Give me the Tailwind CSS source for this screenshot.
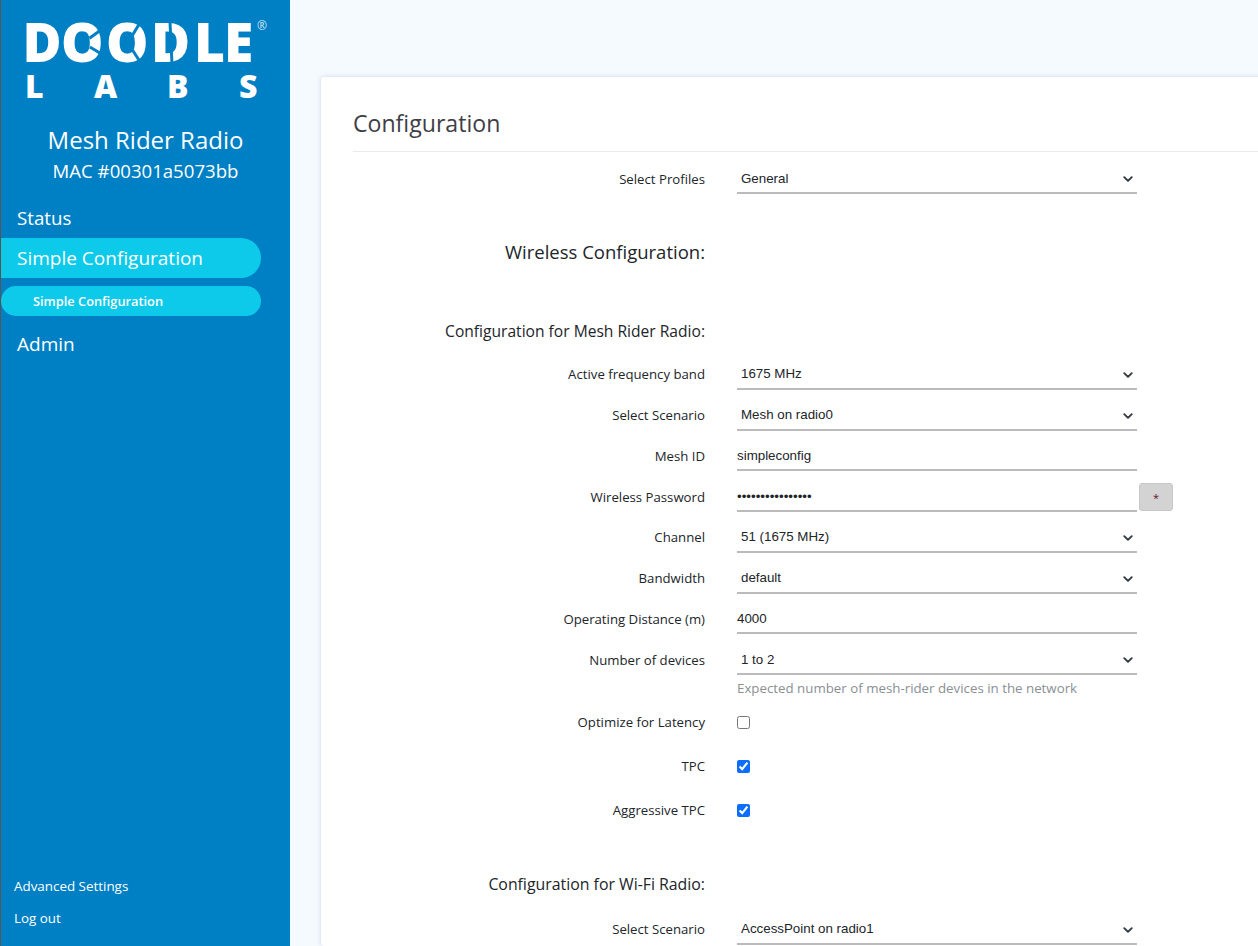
<!DOCTYPE html>
<html lang="en">
<head>
<meta charset="UTF-8">
<title>Configuration - Mesh Rider Radio</title>
<script src="https://cdn.jsdelivr.net/npm/@tailwindcss/browser@4"></script>
</head>
<body class="h-[946px] overflow-hidden bg-[#f5faff] font-['Open_Sans',sans-serif] text-[#212529]">
<div class="flex h-[946px]">

  <!-- sidebar -->
  <aside class="flex w-[290px] shrink-0 flex-col border-l border-[#555] bg-[#0080c4] text-white">
    <svg class="ml-[20px] shrink-0" width="253" height="108" viewBox="0 0 253 108">
      <text transform="scale(0.97 1)" x="1.5 41.2 87.6 134 178.4 209.3" y="62" fill="#fff" font-family="'Open Sans',sans-serif" font-weight="800" font-size="55">DOODLE</text>
      <path d="M68.5 38.3L79.8 30M68.9 47L80.9 54.2M111 36L118.2 24M111.3 49.7L118.9 61.5M149 22L151 64" stroke="#0080c4" stroke-width="3" fill="none"/>
      <text x="236" y="30" fill="#fff" fill-opacity="0.85" font-family="'Open Sans',sans-serif" font-size="12">®</text>
      <text x="4" y="98" fill="#fff" font-family="'Open Sans',sans-serif" font-weight="800" font-size="32">L</text>
      <text x="73" y="98" fill="#fff" font-family="'Open Sans',sans-serif" font-weight="800" font-size="32">A</text>
      <text x="146" y="98" fill="#fff" font-family="'Open Sans',sans-serif" font-weight="800" font-size="32">B</text>
      <text x="218" y="98" fill="#fff" font-family="'Open Sans',sans-serif" font-weight="800" font-size="32">S</text>
    </svg>
    <div class="mt-[16px] text-center text-[24px] leading-[32px]">Mesh Rider Radio</div>
    <div class="mt-[2px] text-center text-[18.6px] leading-[26px]">MAC #00301a5073bb</div>
    <nav class="mt-[14px] flex flex-col">
      <a class="block pl-[16px] text-[18.7px] leading-[40px]">Status</a>
      <a class="block w-[260px] rounded-r-[20px] bg-[#0dcaea] pl-[16px] text-[19px] leading-[40px]">Simple Configuration</a>
      <a class="mt-[8px] block w-[260px] rounded-[15px] bg-[#0dcaea] pl-[32px] text-[12.8px] font-semibold leading-[30px]">Simple Configuration</a>
      <a class="mt-[8px] block pl-[16px] text-[19px] font-medium leading-[40px]">Admin</a>
    </nav>
    <div class="mt-auto flex flex-col gap-[10px] pb-[17px] pl-[13px] text-[13.4px] leading-[22px]">
      <a>Advanced Settings</a>
      <a>Log out</a>
    </div>
  </aside>

  <!-- main -->
  <main class="min-w-0 flex-1 overflow-hidden pl-[31px] pt-[77px]">
    <section class="h-[869px] w-[1000px] overflow-hidden rounded-[3px] bg-white px-[32px] shadow-[0_0_4px_rgba(120,140,160,0.35)]">
      <h1 class="flex h-[75px] items-center border-b border-[#e9ecef] pt-[18px] text-[23.1px] text-[#3e3e46]">Configuration</h1>

      <form class="text-[13.2px]">
        <div class="flex h-[43px] items-center gap-[32px] pt-[8px]">
          <label class="w-[352px] pt-[4px] text-right">Select Profiles</label>
          <div class="relative w-[400px] border-b-2 border-[#bbb]"><select class="h-[31px] w-full appearance-none px-[4px] pt-[4px] font-['Liberation_Sans',sans-serif] text-[13.33px]"><option>General</option></select><svg class="absolute right-[4px] top-[13px]" width="10" height="10" viewBox="0 0 16 16"><path d="M2 5l6 6 6-6" fill="none" stroke="#343a40" stroke-width="3" stroke-linecap="round" stroke-linejoin="round"/></svg></div>
        </div>

        <div class="flex h-[114px] items-center gap-[32px]">
          <label class="w-[352px] text-right text-[18.5px]">Wireless Configuration:</label>
        </div>

        <div class="flex h-[44px] items-end gap-[32px] pb-[10px]">
          <label class="w-[352px] text-right text-[15.6px]">Configuration for Mesh Rider Radio:</label>
        </div>

        <div class="flex h-[40.75px] items-center gap-[32px]">
          <label class="w-[352px] pt-[4px] text-right">Active frequency band</label>
          <div class="relative w-[400px] border-b-2 border-[#bbb]"><select class="h-[31px] w-full appearance-none px-[4px] pt-[4px] font-['Liberation_Sans',sans-serif] text-[13.33px]"><option>1675 MHz</option></select><svg class="absolute right-[4px] top-[13px]" width="10" height="10" viewBox="0 0 16 16"><path d="M2 5l6 6 6-6" fill="none" stroke="#343a40" stroke-width="3" stroke-linecap="round" stroke-linejoin="round"/></svg></div>
        </div>
        <div class="flex h-[40.75px] items-center gap-[32px]">
          <label class="w-[352px] pt-[4px] text-right">Select Scenario</label>
          <div class="relative w-[400px] border-b-2 border-[#bbb]"><select class="h-[31px] w-full appearance-none px-[4px] pt-[4px] font-['Liberation_Sans',sans-serif] text-[13.33px]"><option>Mesh on radio0</option></select><svg class="absolute right-[4px] top-[13px]" width="10" height="10" viewBox="0 0 16 16"><path d="M2 5l6 6 6-6" fill="none" stroke="#343a40" stroke-width="3" stroke-linecap="round" stroke-linejoin="round"/></svg></div>
        </div>
        <div class="flex h-[40.75px] items-center gap-[32px]">
          <label class="w-[352px] pt-[4px] text-right">Mesh ID</label>
          <input class="h-[33px] w-[400px] border-b-2 border-[#bbb] pt-[4px] font-['Liberation_Sans',sans-serif] text-[13.33px]" value="simpleconfig">
        </div>
        <div class="flex h-[40.75px] items-center gap-[32px]">
          <label class="w-[352px] pt-[4px] text-right">Wireless Password</label>
          <input type="password" class="h-[33px] w-[400px] border-b-2 border-[#bbb] pt-[4px] font-['Liberation_Sans',sans-serif] text-[13.33px]" value="simpleconfigpass">
          <button type="button" class="-ml-[30px] mt-[2px] h-[28px] w-[34px] rounded-[3px] border border-[#c8c8c8] bg-[#d3d3d3] pt-[4px] text-[11px] text-[#6b1530]">*</button>
        </div>
        <div class="flex h-[40.75px] items-center gap-[32px]">
          <label class="w-[352px] pt-[4px] text-right">Channel</label>
          <div class="relative w-[400px] border-b-2 border-[#bbb]"><select class="h-[31px] w-full appearance-none px-[4px] pt-[4px] font-['Liberation_Sans',sans-serif] text-[13.33px]"><option>51 (1675 MHz)</option></select><svg class="absolute right-[4px] top-[13px]" width="10" height="10" viewBox="0 0 16 16"><path d="M2 5l6 6 6-6" fill="none" stroke="#343a40" stroke-width="3" stroke-linecap="round" stroke-linejoin="round"/></svg></div>
        </div>
        <div class="flex h-[40.75px] items-center gap-[32px]">
          <label class="w-[352px] pt-[4px] text-right">Bandwidth</label>
          <div class="relative w-[400px] border-b-2 border-[#bbb]"><select class="h-[31px] w-full appearance-none px-[4px] pt-[4px] font-['Liberation_Sans',sans-serif] text-[13.33px]"><option>default</option></select><svg class="absolute right-[4px] top-[13px]" width="10" height="10" viewBox="0 0 16 16"><path d="M2 5l6 6 6-6" fill="none" stroke="#343a40" stroke-width="3" stroke-linecap="round" stroke-linejoin="round"/></svg></div>
        </div>
        <div class="flex h-[40.75px] items-center gap-[32px]">
          <label class="w-[352px] pt-[4px] text-right">Operating Distance (m)</label>
          <input class="h-[33px] w-[400px] border-b-2 border-[#bbb] pt-[4px] font-['Liberation_Sans',sans-serif] text-[13.33px]" value="4000">
        </div>
        <div class="flex h-[40.75px] items-center gap-[32px]">
          <label class="w-[352px] pt-[4px] text-right">Number of devices</label>
          <div class="relative w-[400px] border-b-2 border-[#bbb]"><select class="h-[31px] w-full appearance-none px-[4px] pt-[4px] font-['Liberation_Sans',sans-serif] text-[13.33px]"><option>1 to 2</option></select><svg class="absolute right-[4px] top-[13px]" width="10" height="10" viewBox="0 0 16 16"><path d="M2 5l6 6 6-6" fill="none" stroke="#343a40" stroke-width="3" stroke-linecap="round" stroke-linejoin="round"/></svg></div>
        </div>
        <div class="-mt-[1px] ml-[384px] text-[13.3px] leading-[20px] text-[#8a8f94]">Expected number of mesh-rider devices in the network</div>

        <div class="mt-[2.5px] flex h-[44px] items-center gap-[32px]">
          <label class="w-[352px] text-right">Optimize for Latency</label>
          <input type="checkbox" class="h-[13px] w-[13px]">
        </div>
        <div class="flex h-[44px] items-center gap-[32px]">
          <label class="w-[352px] text-right">TPC</label>
          <input type="checkbox" checked class="h-[13px] w-[13px] accent-[#0d6efd]">
        </div>
        <div class="flex h-[44px] items-center gap-[32px]">
          <label class="w-[352px] text-right">Aggressive TPC</label>
          <input type="checkbox" checked class="h-[13px] w-[13px] accent-[#0d6efd]">
        </div>

        <div class="flex h-[64.5px] items-end gap-[32px]">
          <label class="w-[352px] text-right text-[15.85px]">Configuration for Wi-Fi Radio:</label>
        </div>
        <div class="mt-[11px] flex h-[40.75px] items-center gap-[32px]">
          <label class="w-[352px] pt-[4px] text-right">Select Scenario</label>
          <div class="relative w-[400px] border-b-2 border-[#bbb]"><select class="h-[31px] w-full appearance-none px-[4px] pt-[4px] font-['Liberation_Sans',sans-serif] text-[13.33px]"><option>AccessPoint on radio1</option></select><svg class="absolute right-[4px] top-[13px]" width="10" height="10" viewBox="0 0 16 16"><path d="M2 5l6 6 6-6" fill="none" stroke="#343a40" stroke-width="3" stroke-linecap="round" stroke-linejoin="round"/></svg></div>
        </div>
      </form>
    </section>
  </main>
</div>
</body>
</html>
